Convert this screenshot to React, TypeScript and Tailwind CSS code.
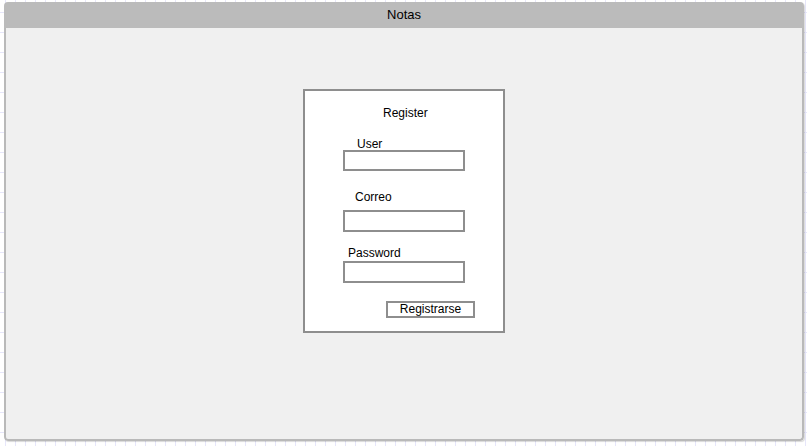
export default function App() {
  return (
    <div className="w-[807px] h-[446px] overflow-hidden bg-white bg-[linear-gradient(to_right,#e6e6fa_1px,transparent_1px),linear-gradient(to_bottom,#e6e6fa_1px,transparent_1px)] bg-[size:10px_20px] bg-[position:5px_12px] font-['Liberation_Sans',Arial,sans-serif] text-black pt-[2px] pl-[4px]">
      <div className="w-[800px] h-[439px] flex flex-col rounded-[4px] overflow-hidden shadow-[1px_1px_1px_rgba(0,0,0,0.15)]">
        <div className="h-[26px] shrink-0 bg-[#bbbbbb] text-center text-[13px] leading-[26px]">
          Notas
        </div>
        <div className="flex-1 bg-[#f0f0f0] border-2 border-t-0 border-[#b9b9b9] rounded-b-[4px]">
          <div className="ml-[297px] mt-[61px] w-[202px] h-[244px] border-2 border-[#8e8e8e] bg-white flex flex-col items-start text-[12px] leading-[14px]">
            <div className="mt-[15px] ml-[78px]">Register</div>
            <div className="mt-[17px] ml-[52px] h-[13px]">User</div>
            <div className="ml-[38px] w-[122px] h-[21px] border-2 border-[#8e8e8e] bg-white" />
            <div className="mt-[19px] ml-[50px]">Correo</div>
            <div className="mt-[6px] ml-[38px] w-[122px] h-[22px] border-2 border-[#8e8e8e] bg-white" />
            <div className="mt-[14px] ml-[43px]">Password</div>
            <div className="mt-[1px] ml-[38px] w-[122px] h-[22px] border-2 border-[#8e8e8e] bg-white" />
            <div className="mt-[18px] ml-[81px] w-[89px] h-[17px] border-2 border-[#8e8e8e] bg-white flex items-center justify-center leading-[13px]">
              Registrarse
            </div>
          </div>
        </div>
      </div>
    </div>
  );
}
